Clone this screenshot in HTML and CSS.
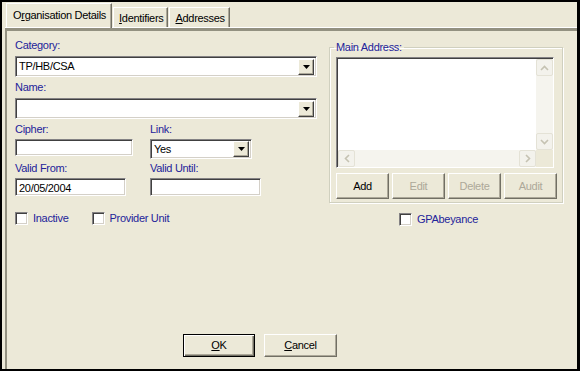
FILE: index.html
```html
<!DOCTYPE html>
<html lang="en">
<head>
    <meta charset="UTF-8">
    <title>Organisation Details</title>
    <link rel="stylesheet" href="styles.css">
</head>
<body>
    <div class="window">
        <div class="tabs">
            <div class="tab active">O<u>r</u>ganisation Details</div>
            <div class="tab"><u>I</u>dentifiers</div>
            <div class="tab"><u>A</u>ddresses</div>
        </div>

        <div class="panel">
            <div class="form">
                <div class="left">
                    <div class="lbl">Category:</div>
                    <div class="combo wide">
                        <span class="val">TP/HB/CSA</span>
                        <span class="drop"><svg width="7" height="4" viewBox="0 0 7 4"><path d="M0 0h7L3.5 4z" fill="#000"/></svg></span>
                    </div>

                    <div class="lbl">Name:</div>
                    <div class="combo wide">
                        <span class="val"></span>
                        <span class="drop"><svg width="7" height="4" viewBox="0 0 7 4"><path d="M0 0h7L3.5 4z" fill="#000"/></svg></span>
                    </div>

                    <div class="row">
                        <div class="field first">
                            <div class="lbl">Cipher:</div>
                            <div class="edit cipher"></div>
                        </div>
                        <div class="field">
                            <div class="lbl">Link:</div>
                            <div class="combo link">
                                <span class="val">Yes</span>
                                <span class="drop"><svg width="7" height="4" viewBox="0 0 7 4"><path d="M0 0h7L3.5 4z" fill="#000"/></svg></span>
                            </div>
                        </div>
                    </div>

                    <div class="row">
                        <div class="field first">
                            <div class="lbl">Valid From:</div>
                            <div class="edit date">20/05/2004</div>
                        </div>
                        <div class="field">
                            <div class="lbl">Valid Until:</div>
                            <div class="edit date"></div>
                        </div>
                    </div>

                    <div class="checks">
                        <label class="check"><span class="box"></span>Inactive</label>
                        <label class="check provider"><span class="box"></span>Provider Unit</label>
                    </div>
                </div>

                <div class="right">
                    <fieldset class="group">
                        <legend>Main Address:</legend>
                        <div class="memo">
                            <div class="memo-body">
                                <div class="memo-text"></div>
                                <div class="vscroll">
                                    <span class="sbtn"><svg width="9" height="6" viewBox="0 0 9 6"><path d="M1 5L4.5 1.5L8 5" fill="none" stroke="#c5c2b2" stroke-width="1.6"/></svg></span>
                                    <span class="sbtn"><svg width="9" height="6" viewBox="0 0 9 6"><path d="M1 1L4.5 4.5L8 1" fill="none" stroke="#c5c2b2" stroke-width="1.6"/></svg></span>
                                </div>
                            </div>
                            <div class="hscroll">
                                <span class="sbtn"><svg width="6" height="9" viewBox="0 0 6 9"><path d="M5 1L1.5 4.5L5 8" fill="none" stroke="#c5c2b2" stroke-width="1.6"/></svg></span>
                                <span class="sbtn"><svg width="6" height="9" viewBox="0 0 6 9"><path d="M1 1L4.5 4.5L1 8" fill="none" stroke="#c5c2b2" stroke-width="1.6"/></svg></span>
                                <span class="corner"></span>
                            </div>
                        </div>
                        <div class="actions">
                            <button class="btn">Add</button>
                            <button class="btn" disabled>Edit</button>
                            <button class="btn" disabled>Delete</button>
                            <button class="btn" disabled>Audit</button>
                        </div>
                    </fieldset>
                    <label class="check abeyance"><span class="box"></span>GPAbeyance</label>
                </div>
            </div>

            <div class="footer">
                <button class="btn default"><u>O</u>K</button>
                <button class="btn cancel"><u>C</u>ancel</button>
            </div>
        </div>
    </div>
</body>
</html>
```

FILE: styles.css
```css
body {
    margin: 0;
    background: #000;
    font-family: 'Liberation Sans', Arial, sans-serif;
    font-size: 11px;
    line-height: 13px;
    letter-spacing: -0.3px;
    color: #000;
}

.window {
    width: 580px;
    height: 371px;
    box-sizing: border-box;
    border: 2px solid #000;
    border-right-width: 3px;
    background: #ece9d8;
    display: flex;
    flex-direction: column;
}

/* tab strip */
.tabs {
    display: flex;
    align-items: flex-end;
    height: 26px;
    padding-left: 4px;
}

.tab {
    height: 21px;
    box-sizing: border-box;
    padding: 4px 4px 0 5px;
    border-top: 1px solid #fff;
    border-left: 1px solid #fff;
    border-right: 1px solid #716f64;
    box-shadow: inset -1px 0 #aca899;
    margin-right: 1px;
    white-space: nowrap;
}

.tab.active {
    height: 25px;
    padding: 5px 5px 0 6px;
    position: relative;
    z-index: 1;
}

.panel {
    flex: 1;
    margin-left: 3px;
    border-top: 3px solid #939181;
    border-left: 2px solid #939181;
    box-shadow: 0 -1px 0 #fff;
    display: flex;
    flex-direction: column;
}

.form {
    display: grid;
    grid-template-columns: 302px 233px;
    column-gap: 12px;
    padding: 8px 0 0 8px;
}

.lbl {
    color: #23239a;
    height: 13px;
    margin-bottom: 3px;
}

.left > .lbl {
    margin-bottom: 4px;
}

/* sunken edit & combo */
.edit, .combo {
    background: #fff;
    box-sizing: border-box;
    border: 1px solid;
    border-color: #848284 #fff #fff #848284;
    box-shadow: inset 1px 1px #404040, inset -1px -1px #d4d0c8;
    padding: 2px 3px;
    white-space: nowrap;
}

.combo {
    height: 21px;
    display: flex;
    align-items: center;
    padding: 2px 2px 2px 3px;
    margin-bottom: 4px;
}

.combo .val {
    flex: 1;
}

.combo.wide {
    width: 302px;
}

.combo.link {
    width: 102px;
    height: 20px;
    margin-bottom: 0;
}

.drop {
    width: 16px;
    height: 16px;
    box-sizing: border-box;
    background: #ece9d8;
    border: 1px solid;
    border-color: #fff #404040 #404040 #fff;
    box-shadow: inset -1px -1px #aca899;
    display: flex;
    align-items: center;
    justify-content: center;
}

.row {
    display: flex;
    margin-bottom: 3px;
}

.field.first {
    width: 135px;
}

.edit {
    height: 18px;
    padding: 3px 3px 0;
}

.edit.cipher {
    width: 118px;
    height: 17px;
}

.edit.date {
    width: 111px;
}

/* check boxes */
.checks {
    display: flex;
    margin-top: 16px;
}

.check {
    display: flex;
    align-items: center;
    color: #23239a;
    height: 13px;
}

.box {
    width: 13px;
    height: 13px;
    box-sizing: border-box;
    background: #fff;
    border: 1px solid;
    border-color: #848284 #fff #fff #848284;
    box-shadow: inset 1px 1px #404040, inset -1px -1px #d4d0c8;
    margin-right: 5px;
}

.check.provider {
    margin-left: 23px;
}

/* address group */
.group {
    margin: 2px 0 0;
    padding: 3px 5px 3px 6px;
    border: 1px solid #d0d0bf;
    box-shadow: inset 1px 1px #fff, 1px 1px #fff;
    height: 162px;
    box-sizing: border-box;
}

.group legend {
    color: #23239a;
    padding: 0 2px 0 2px;
    margin-left: -2px;
}

.memo {
    width: 218px;
    height: 111px;
    box-sizing: border-box;
    border: 1px solid;
    border-color: #848284 #fff #fff #848284;
    box-shadow: inset 1px 1px #404040;
    background: #fff;
    padding: 1px 0 0 1px;
    display: flex;
    flex-direction: column;
}

.memo-body {
    flex: 1;
    display: flex;
}

.memo-text {
    flex: 1;
}

.vscroll {
    width: 17px;
    background: #f5f4ee;
    display: flex;
    flex-direction: column;
    justify-content: space-between;
}

.hscroll {
    height: 17px;
    background: #f5f4ee;
    display: flex;
}

.hscroll .sbtn:nth-child(2) {
    margin-left: auto;
}

.sbtn {
    width: 17px;
    height: 17px;
    box-sizing: border-box;
    border: 1px solid #e4e2d6;
    border-radius: 2px;
    background: #f3f2ec;
    display: flex;
    align-items: center;
    justify-content: center;
}

.corner {
    width: 17px;
    height: 17px;
    background: #ece9d8;
}

.actions {
    display: flex;
    gap: 3px;
    margin-top: 5px;
}

/* raised buttons */
.btn {
    font: inherit;
    letter-spacing: inherit;
    color: #000;
    background: #ece9d8;
    box-sizing: border-box;
    border: 1px solid;
    border-color: #fff #716f64 #716f64 #fff;
    box-shadow: inset -1px -1px #aca899;
    padding: 0;
    height: 26px;
    width: 53px;
}

.btn:disabled {
    color: #aca899;
}

.abeyance {
    margin: 10px 0 0 70px;
}

.footer {
    margin-top: auto;
    padding: 0 0 12px 176px;
    display: flex;
}

.footer .btn {
    height: 23px;
    width: 73px;
}

.btn.default {
    width: 72px;
    border: 1px solid #000;
    box-shadow: inset 1px 1px #fff, inset -1px -1px #716f64, inset -2px -2px #aca899;
}

.btn.cancel {
    margin-left: 9px;
}
```
